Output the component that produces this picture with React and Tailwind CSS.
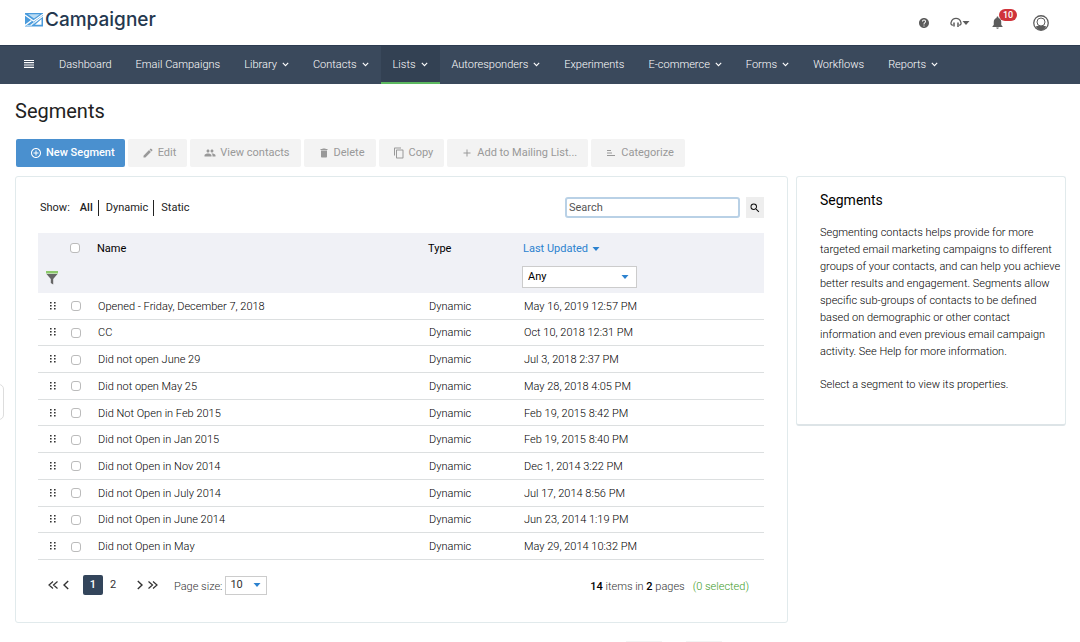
import { useState } from 'react';
import {
  MdContentCopy, MdDelete, MdEdit, MdAdd, MdAddCircleOutline, MdPeople, MdSearch,
  MdHelp, MdNotifications,
} from 'react-icons/md';

const NAV = [
  { label: 'Dashboard' },
  { label: 'Email Campaigns' },
  { label: 'Library', menu: true },
  { label: 'Contacts', menu: true },
  { label: 'Lists', menu: true, active: true },
  { label: 'Autoresponders', menu: true },
  { label: 'Experiments' },
  { label: 'E-commerce', menu: true },
  { label: 'Forms', menu: true },
  { label: 'Workflows' },
  { label: 'Reports', menu: true },
];

const SEGMENTS = [
  ['Opened - Friday, December 7, 2018', 'May 16, 2019 12:57 PM'],
  ['CC', 'Oct 10, 2018 12:31 PM'],
  ['Did not open June 29', 'Jul 3, 2018 2:37 PM'],
  ['Did not open May 25', 'May 28, 2018 4:05 PM'],
  ['Did Not Open in Feb 2015', 'Feb 19, 2015 8:42 PM'],
  ['Did not Open in Jan 2015', 'Feb 19, 2015 8:40 PM'],
  ['Did not Open in Nov 2014', 'Dec 1, 2014 3:22 PM'],
  ['Did not Open in July 2014', 'Jul 17, 2014 8:56 PM'],
  ['Did not Open in June 2014', 'Jun 23, 2014 1:19 PM'],
  ['Did not Open in May', 'May 29, 2014 10:32 PM'],
];

function Caret({ className = '' }) {
  return (
    <svg viewBox="0 0 8 4" className={`w-2 h-1 ${className}`} fill="currentColor">
      <path d="M0.5 0H7.5L4 4Z" />
    </svg>
  );
}

function Chevron() {
  return (
    <svg viewBox="0 0 7 5" className="w-[7px] h-[5px]" fill="none" stroke="currentColor" strokeWidth="1.1">
      <path d="M0.8 0.8L3.5 3.6L6.2 0.8" />
    </svg>
  );
}

function CategorizeIcon() {
  return (
    <svg viewBox="0 0 12 12" className="size-3" fill="none" stroke="currentColor">
      <path d="M2 3.5h4M2 6h5M2 8.5h8" />
    </svg>
  );
}

function DragDots() {
  return (
    <svg viewBox="0 0 6 8" className="w-[6px] h-2 ml-3" fill="#333">
      <path d="M0 0h1.6v1.6H0zM4 0h1.6v1.6H4zM0 3h1.6v1.6H0zM4 3h1.6v1.6H4zM0 6h1.6v1.6H0zM4 6h1.6v1.6H4z" />
    </svg>
  );
}

function LogoMark() {
  return (
    <svg viewBox="0 0 18 14" className="w-[18px] h-[14px]">
      <path d="M0 0H18V13.5H0Z" fill="#4a9bdc" />
      <path d="M10 11.8L16.5 6V11.8Z" fill="#fff" />
      <path d="M0 2L8.5 8L18 1.2" fill="none" stroke="#fff" strokeWidth="1.3" />
      <path d="M3 1.3H15L9 5.4Z" fill="#bcdcf3" />
      <path d="M0 12.4L6.5 7.4M5.5 12.6L17.8 3.2" fill="none" stroke="#fff" strokeWidth="1.3" />
      <path d="M1.5 12.6H6L10.5 9" fill="none" stroke="#bcdcf3" strokeWidth="1" />
    </svg>
  );
}

function Headset() {
  return (
    <svg viewBox="0 0 12 12" className="size-3" fill="none" stroke="#5c5c5c" strokeWidth="1.3">
      <path d="M3 8.2C1 8.2 .6 6.6 1.2 5C2 2.6 3.8 1.4 6 1.4S10 2.6 10.8 5C11.4 6.6 11 8.2 9 8.2" />
      <path d="M4 5.4V9.6M8 5.4V10" strokeWidth="1.5" />
    </svg>
  );
}

function UserIcon() {
  return (
    <svg viewBox="0 0 16 16" className="size-4">
      <circle cx="8" cy="8" r="7.9" fill="#5c5c5c" />
      <circle cx="8" cy="8" r="6.6" fill="#fff" />
      <path d="M2.6 11.4Q5 10.4 8 10.4T13.4 11.4Q11.5 15 8 15T2.6 11.4Z" fill="#5c5c5c" />
      <circle cx="8" cy="7" r="4" fill="#fff" stroke="#5c5c5c" strokeWidth="1" />
    </svg>
  );
}

function FilterIcon() {
  return (
    <svg viewBox="0 0 12 14" className="w-3 h-[14px]">
      <path d="M0 0H12V2.5H0Z" fill="#8cc96b" />
      <path d="M0.5 3H11.5L7.2 8V13.5L4.8 12V8Z" fill="#666" />
    </svg>
  );
}

function ToolButton({ icon, children }) {
  return (
    <button className="flex items-center gap-1 h-7 pl-[14px] pr-[11px] rounded-[2px] bg-[#f3f3f3] text-[#999] whitespace-nowrap">
      {icon}
      {children}
    </button>
  );
}

function Check({ label }) {
  return (
    <input
      type="checkbox"
      aria-label={label}
      className="block size-[10px] appearance-none rounded-[3px] border border-[#bbb] bg-white checked:bg-[#4a90cf]"
    />
  );
}

function Header() {
  return (
    <header className="flex items-center justify-between h-[45px] pl-[25px] pr-[31px]">
      <a href="#home" className="flex items-center gap-[2px] pb-[6px]">
        <LogoMark />
        <span className="font-['Inter',sans-serif] text-[19px] leading-6 font-medium text-[#24384f]">Campaigner</span>
      </a>
      <div className="flex items-center text-[#5c5c5c]">
        <button aria-label="Help"><MdHelp size={12} /></button>
        <button aria-label="Support" className="flex items-center ml-5">
          <Headset />
          <Caret />
        </button>
        <button aria-label="Notifications" className="relative ml-5">
          <MdNotifications size={15} />
          <span className="absolute left-[9px] -top-[6px] px-1 rounded-full bg-[#d0333a] text-white text-[9px] leading-3 font-medium">10</span>
        </button>
        <button aria-label="Account" className="ml-7"><UserIcon /></button>
      </div>
    </header>
  );
}

function Nav() {
  return (
    <nav className="flex items-stretch h-[39px] pl-[24px] bg-[#3a495c] border-t border-[#2c3b50] text-white">
      <button aria-label="Menu" className="flex items-center pr-[13px] border-b-2 border-transparent">
        <svg viewBox="0 0 10 8" className="w-[10px] h-2" fill="#fff">
          <path d="M0 0H10V1H0ZM0 2H10V3.2H0ZM0 4.4H10V5.6H0ZM0 6.8H10V8H0Z" />
        </svg>
      </button>
      {NAV.map((item) => (
        <a
          key={item.label}
          href="#nav"
          className={`flex items-center gap-[5px] px-3 pt-px border-b-2 whitespace-nowrap font-light ${item.active ? 'bg-[#334153] border-[#5cb860]' : 'border-transparent'}`}
        >
          {item.label}
          {item.menu && <Chevron />}
        </a>
      ))}
    </nav>
  );
}

function SegmentTable() {
  return (
    <table className="w-full h-[327px] mt-[15px] table-fixed text-left text-black">
      <colgroup>
        <col className="w-[30px]" />
        <col className="w-[29px]" />
        <col />
        <col className="w-[95px]" />
        <col className="w-[241px]" />
      </colgroup>
      <thead className="bg-[#f0f1f6]">
        <tr className="h-[30px]">
          <th></th>
          <th className="pl-[2px]"><Check label="Select all segments" /></th>
          <th className="pt-[2px] font-normal">Name</th>
          <th className="pt-[2px] font-normal">Type</th>
          <th className="pt-[2px] font-normal">
            <button className="flex items-center gap-1 text-[#2c82cf]">
              Last Updated <Caret />
            </button>
          </th>
        </tr>
        <tr className="h-[30px]">
          <td className="pl-2"><button aria-label="Filter" className="block"><FilterIcon /></button></td>
          <td></td>
          <td></td>
          <td></td>
          <td className="pb-[2px]">
            <div className="relative -ml-px w-[115px]">
              <select aria-label="Updated filter" className="block w-full h-[22px] pl-[5px] appearance-none border border-[#ccc] bg-white">
                <option>Any</option>
              </select>
              <Caret className="absolute right-2 top-[9px] text-[#2c82cf] pointer-events-none" />
            </div>
          </td>
        </tr>
      </thead>
      <tbody className="font-light">
        {SEGMENTS.map(([name, updated]) => (
          <tr key={name} className="border-b border-[#dcdfe0]">
            <td><DragDots /></td>
            <td className="pl-[3px] pt-px"><Check label={name} /></td>
            <td className="pl-px pt-[2px]">{name}</td>
            <td className="pl-px pt-[2px]">Dynamic</td>
            <td className="pl-px pt-[2px]">{updated}</td>
          </tr>
        ))}
      </tbody>
    </table>
  );
}

function Pager() {
  const [page, setPage] = useState(1);
  return (
    <div className="flex items-center pt-[15px] pl-[10px] pr-[15px]">
      <div className="flex items-center text-[#333]">
        <button aria-label="First page" onClick={() => setPage(1)}>
          <svg viewBox="0 0 10 10" className="size-[10px]" fill="none" stroke="currentColor" strokeWidth="1.2"><path d="M5 1.5L1 5L5 8.5M9.5 1.5L5.5 5L9.5 8.5" /></svg>
        </button>
        <button aria-label="Previous page" className="ml-[5px]" onClick={() => setPage(1)}>
          <svg viewBox="0 0 6 10" className="w-[6px] h-[10px]" fill="none" stroke="currentColor" strokeWidth="1.4"><path d="M5.2 1L1 5L5.2 9" /></svg>
        </button>
        <div className="flex mx-[14px]">
          {[1, 2].map((n) => (
            <button
              key={n}
              onClick={() => setPage(n)}
              className={`w-5 h-5 rounded-[2px] ${n === page ? 'bg-[#33455b] text-white font-medium' : ''}`}
            >
              {n}
            </button>
          ))}
        </div>
        <button aria-label="Next page" onClick={() => setPage(2)}>
          <svg viewBox="0 0 6 10" className="w-[6px] h-[10px]" fill="none" stroke="currentColor" strokeWidth="1.4"><path d="M.8 1L5 5L.8 9" /></svg>
        </button>
        <button aria-label="Last page" className="ml-[5px]" onClick={() => setPage(2)}>
          <svg viewBox="0 0 10 10" className="size-[10px]" fill="none" stroke="currentColor" strokeWidth="1.2"><path d="M.5 1.5L4.5 5L.5 8.5M5 1.5L9 5L5 8.5" /></svg>
        </button>
      </div>
      <label htmlFor="size" className="ml-4 pt-1 font-light text-[#333]">Page size:</label>
      <div className="relative ml-[3px] w-[42px]">
        <select id="size" className="block w-full h-[19px] pl-1 appearance-none border border-[#ccc] bg-white text-[#333]">
          <option>10</option>
        </select>
        <Caret className="absolute right-[6px] top-[7px] text-[#2c82cf] pointer-events-none" />
      </div>
      <p className="ml-auto pt-1 font-light text-[#333]">
        <b className="font-medium text-black">14</b> items in <b className="font-medium text-black">2</b> pages
        <span className="ml-2 text-[#3a9a1c]">(0 selected)</span>
      </p>
    </div>
  );
}

export default function App() {
  return (
    <div className="relative bg-white font-['Roboto',sans-serif] text-[11px] leading-4">
      <Header />
      <Nav />
      <main className="pl-[15px] pr-[14px]">
        <h1 className="pt-[14px] text-[20px] leading-[26px] text-[#222]">Segments</h1>
        <div className="flex gap-[3px] mt-[15px] pl-px">
          <button className="flex items-center gap-1 h-7 pl-[14px] pr-[10px] rounded-[2px] bg-[#4a90cf] text-white font-medium whitespace-nowrap">
            <MdAddCircleOutline size={12} />
            New Segment
          </button>
          <ToolButton icon={<MdEdit size={12} />}>Edit</ToolButton>
          <ToolButton icon={<MdPeople size={12} />}>View contacts</ToolButton>
          <ToolButton icon={<MdDelete size={12} />}>Delete</ToolButton>
          <ToolButton icon={<MdContentCopy size={12} />}>Copy</ToolButton>
          <ToolButton icon={<MdAdd size={12} />}>Add to Mailing List...</ToolButton>
          <ToolButton icon={<CategorizeIcon />}>Categorize</ToolButton>
        </div>
        <div className="flex items-start gap-2 mt-[9px]">
          <section className="flex-1 min-w-0 pt-5 pl-[22px] pr-[23px] pb-[27px] rounded-[3px] border border-[#e1eaec]">
            <div className="flex items-center">
              <div className="flex items-center pl-[2px] text-[#222]">
                <span className="mr-[10px]">Show:</span>
                <button className="font-medium pr-[5px] border-r border-[#222]">All</button>
                <button className="pl-[7px] pr-[5px] border-r border-[#222]">Dynamic</button>
                <button className="pl-[7px]">Static</button>
              </div>
              <input
                type="text"
                aria-label="Search"
                placeholder="Search"
                className="ml-auto w-[175px] h-[21px] px-[2px] rounded-[3px] border-2 border-[#b9d1e6] placeholder:text-[#555] outline-none"
              />
              <button aria-label="Run search" className="flex items-center justify-center ml-[6px] w-[18px] h-[21px] bg-[#eee] text-[#111]">
                <MdSearch size={12} />
              </button>
            </div>
            <SegmentTable />
            <Pager />
          </section>
          <aside className="w-[270px] shrink-0 pt-[14px] pl-[23px] pr-1 pb-[31px] rounded-[3px] border border-[#e1eaec] border-b-2 border-b-[#dde4e7] text-black">
            <h2 className="text-[14px] leading-[18px]">Segments</h2>
            <p className="mt-[15px] font-light leading-[17px]">
              Segmenting contacts helps provide for more targeted email marketing campaigns to different
              groups of your contacts, and can help you achieve better results and engagement. Segments
              allow specific sub-groups of contacts to be defined based on demographic or other contact
              information and even previous email campaign activity. See Help for more information.
            </p>
            <p className="mt-4 font-light leading-[17px]">Select a segment to view its properties.</p>
          </aside>
        </div>
      </main>
      <footer className="flex gap-6 justify-end mt-[18px] pr-[358px]">
        <span className="w-9 h-px bg-[#f3f3f3]"></span>
        <span className="w-9 h-px bg-[#f3f3f3]"></span>
      </footer>
      {/* collapsed drawer handle on the window edge */}
      <button aria-label="Open drawer" className="absolute -left-1 top-[384px] w-2 h-9 rounded-r-[5px] border border-[#ddd] bg-white"></button>
    </div>
  );
}
